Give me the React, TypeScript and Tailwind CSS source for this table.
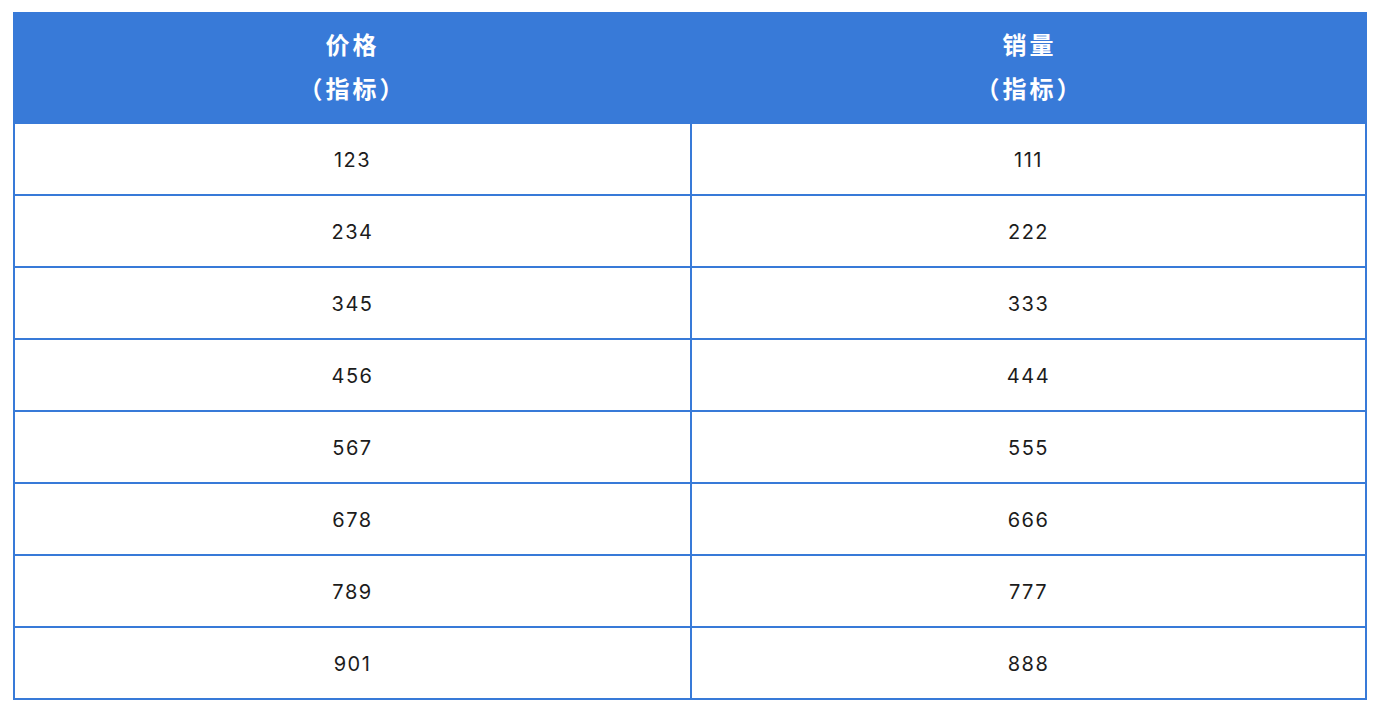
const rows = [
  ["123", "111"],
  ["234", "222"],
  ["345", "333"],
  ["456", "444"],
  ["567", "555"],
  ["678", "666"],
  ["789", "777"],
  ["901", "888"],
];

const headers = ["价格", "销量"];

export default function App() {
  return (
    <div className="min-h-screen bg-white pl-[13px] pt-[12px] font-['Inter','Noto_Sans_CJK_SC',sans-serif]">
      <div className="w-[1354px]">
        <div className="grid h-[112px] grid-cols-[679px_1fr] bg-[#387ad8] text-white">
          {headers.map((h) => (
            <div
              key={h}
              className="flex flex-col items-center justify-center text-[24px] font-bold leading-[44px] tracking-[3px]"
            >
              <div>{h}</div>
              <div>（指标）</div>
            </div>
          ))}
        </div>
        <div className="grid grid-cols-[677px_1fr] border-x-2 border-[#387ad8]">
          {rows.map(([a, b]) => (
            <div key={a} className="contents">
              <div className="flex h-[72px] items-center justify-center border-b-2 border-r-2 border-[#387ad8] pt-[2px] text-[20px] tracking-[1.5px] text-[#1c1c1c]">
                {a}
              </div>
              <div className="flex h-[72px] items-center justify-center border-b-2 border-[#387ad8] pt-[2px] text-[20px] tracking-[1.5px] text-[#1c1c1c]">
                {b}
              </div>
            </div>
          ))}
        </div>
      </div>
    </div>
  );
}
